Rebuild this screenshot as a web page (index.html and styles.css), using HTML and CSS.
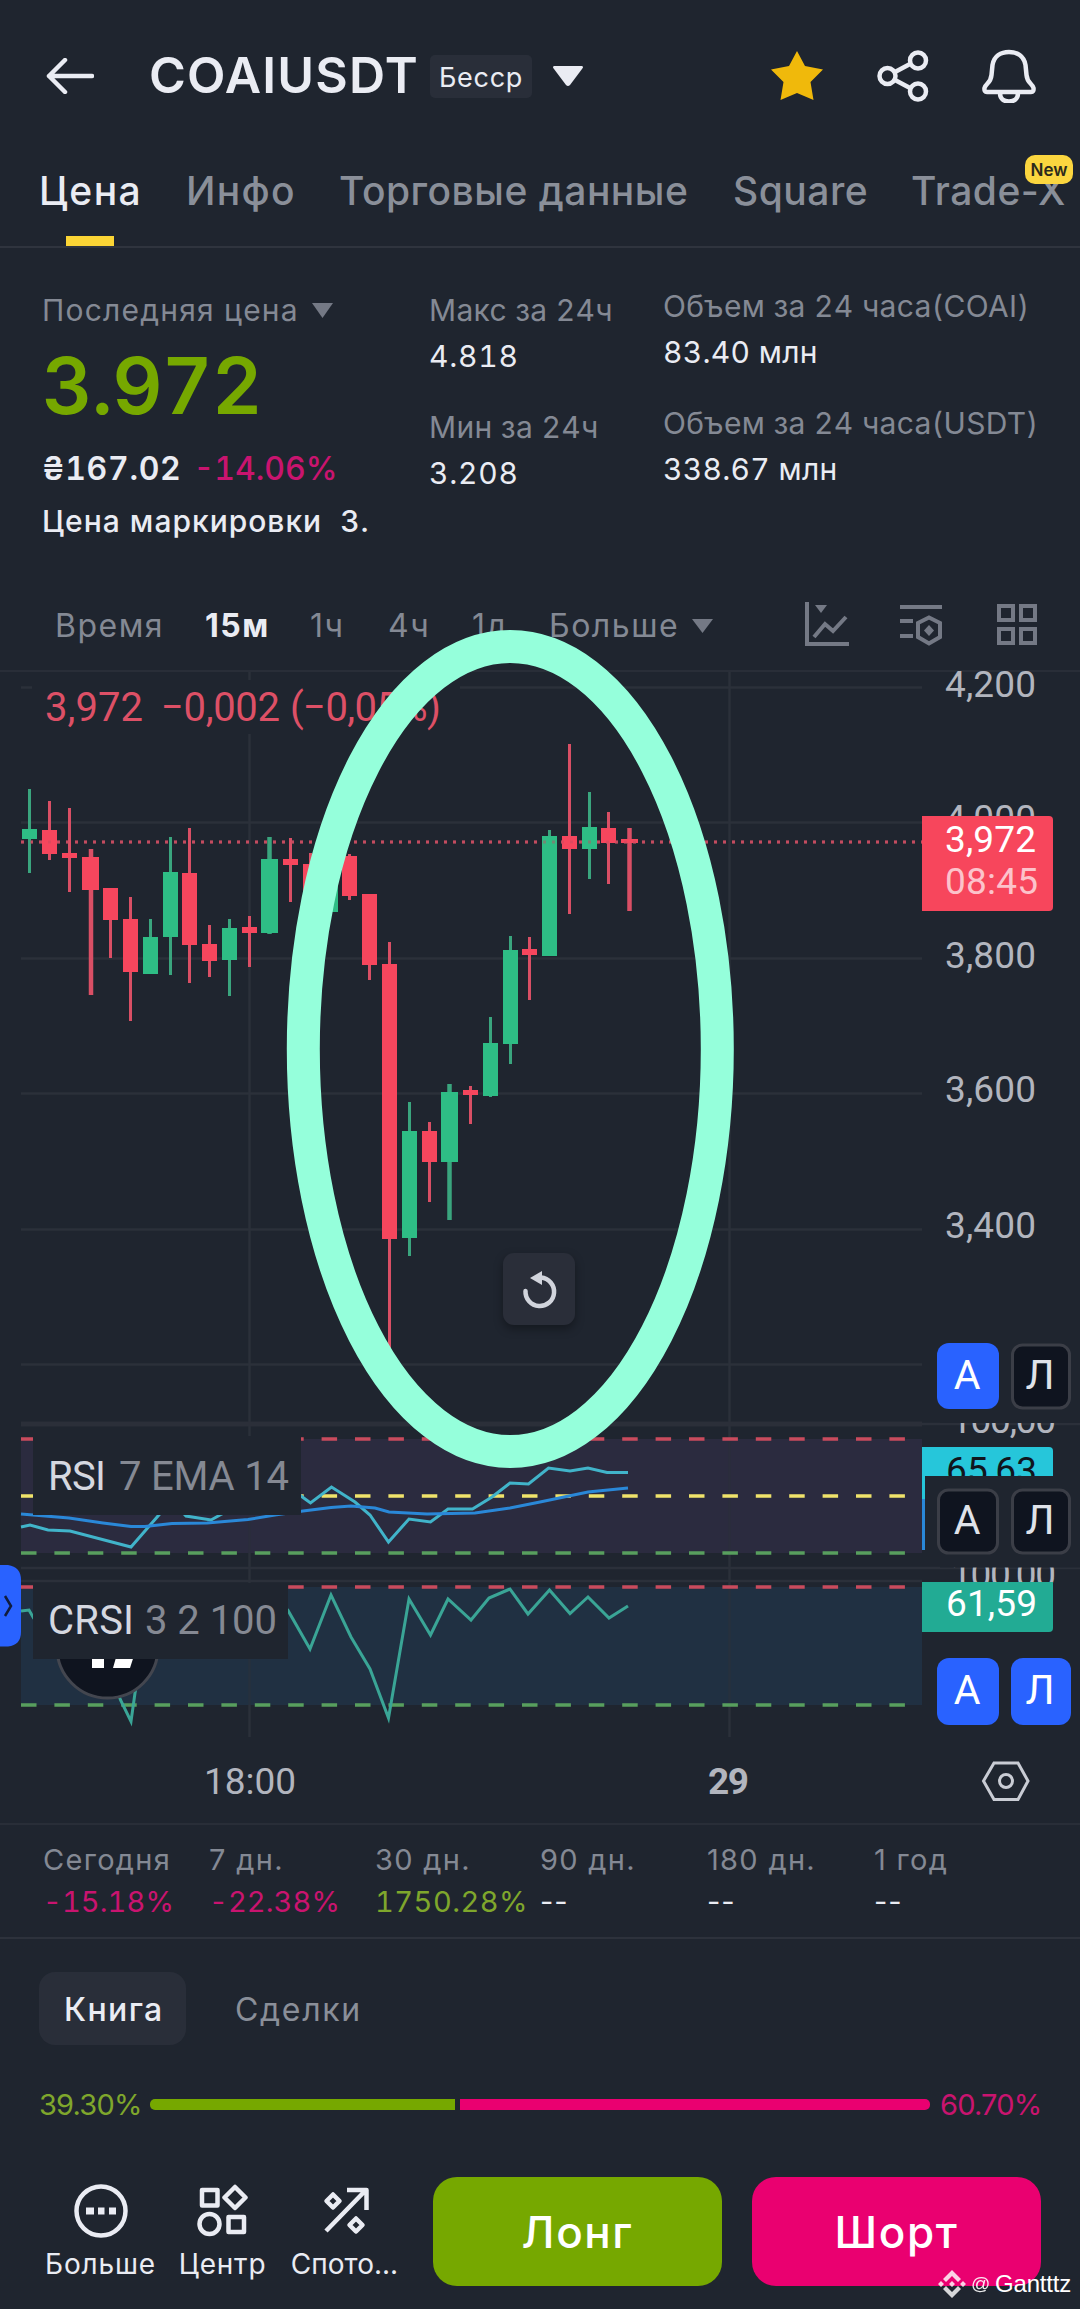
FILE: index.html
```html
<!DOCTYPE html>
<html lang="ru">
<head>
    <meta charset="UTF-8">
    <meta name="viewport" content="width=device-width, initial-scale=1.0">
    <title>COAIUSDT</title>
    <link rel="stylesheet" href="styles.css">
</head>
<body>
<header class="header">
    <svg class="back" width="48" height="36" viewBox="0 0 48 36"><path d="M46 18H3M19 2L3 18L19 34"/></svg>
    <h1>COAIUSDT</h1>
    <span class="badge">Бесср</span>
    <svg class="caret" width="32" height="22" viewBox="0 0 32 22"><path d="M2 1H30Q32 2 30 4L18 20Q16 22 14 20L2 4Q0 2 2 1Z"/></svg>
    <div class="header-icons">
        <svg width="54" height="52" viewBox="0 0 54 52"><path class="star" d="M27 1L35 16L53 19.500L40.500 32L43.500 50L27 43L10.500 50L13.500 32L1 19.500L19 16Z"/></svg>
        <svg width="52" height="52" viewBox="0 0 52 52"><path d="M18 22L33 14M18 30L33 38"/><circle cx="10.500" cy="26" r="8"/><circle cx="41" cy="10.500" r="8"/><circle cx="41" cy="41.500" r="8"/></svg>
        <svg width="54" height="54" viewBox="0 0 54 54"><path d="M5 43Q2 43 2.500 39Q3 37 5.500 34.500Q9 31 9.500 26L10.500 16C12 7 19 3 27 3S42 7 43.500 16L44.500 26Q45 31 48.500 34.500Q51 37 51.500 39Q52 43 49 43ZM18 44C18 50 22 52.500 27 52.500S36 50 36 44"/></svg>
    </div>
</header>

<nav class="tabs">
    <a class="active">Цена</a>
    <a class="info">Инфо</a>
    <a>Торговые данные</a>
    <a>Square</a>
    <a>Trade-X<span class="new">New</span></a>
</nav>

<section class="stats">
    <div class="last">
        <div class="last-label">Последняя цена <svg width="21" height="15" viewBox="0 0 21 15"><path d="M0 0H21L10.500 15Z"/></svg></div>
        <div class="last-price">3.972</div>
        <div class="last-change"><span>₴167.02</span><span class="down">-14.06%</span></div>
        <div class="mark"><span>Цена маркировки</span><span>3.</span></div>
    </div>
    <dl class="range">
        <dt>Макс за 24ч</dt>
        <dd>4.818</dd>
        <dt>Мин за 24ч</dt>
        <dd>3.208</dd>
    </dl>
    <dl class="volume">
        <dt>Объем за 24 часа(COAI)</dt>
        <dd>83.40 млн</dd>
        <dt>Объем за 24 часа(USDT)</dt>
        <dd>338.67 млн</dd>
    </dl>
</section>

<div class="frames">
    <span>Время</span>
    <span class="active">15м</span>
    <span>1ч</span>
    <span>4ч</span>
    <span>1д</span>
    <span class="more">Больше <svg width="21" height="14" viewBox="0 0 21 14"><path d="M0 0H21L10.500 14Z"/></svg></span>
    <svg class="tool" width="44" height="44" viewBox="0 0 44 44"><path d="M2 0V42H44M9 35L20 22L28 29L41 15"/><path class="fill" d="M10 3H22L16 11Z"/></svg>
    <svg class="tool" width="42" height="44" viewBox="0 0 42 44"><path d="M0 5H42M0 19H13M0 34H13M29 15.500L40 21V35L29 41.500L18 35V21Z"/><path class="fill" d="M29 23L34 28.500L29 34L24 28.500Z"/></svg>
    <svg class="tool" width="42" height="44" viewBox="0 0 42 44"><path d="M3 4H17V18H3ZM25 4H39V18H25ZM3 27H17V41H3ZM25 27H39V41H25Z"/></svg>
</div>

<section class="chart">
    <svg width="1080" height="1151" viewBox="0 672 1080 1151">
        <!-- grid -->
        <path class="grid" d="M21 687.500H922M21 822.500H922M21 958.500H922M21 1093.500H922M21 1229.500H922M21 1364.500H922M249.500 672V1737M729.500 672V1737"/>
        <path class="sep" d="M21 1424H922"/>
        <path class="grid" d="M922 1424H1080M21 1568H1080M21 1581H922"/>

        <!-- candles -->
        <path class="price-line" d="M21 842H922"/>
        <path class="wick up" d="M29.500 789V873M150.500 919V974M170.500 837V975M229.500 919V996M409.500 1102V1256M490.500 1017V1097M510.500 936V1064M549.500 830V956M589.500 792V879"/>
        <path class="wick down" d="M49.500 801V860M69.500 808V892M110.500 888V958M130.500 897V1021M189.500 828V983M209.500 925V977M249.500 916V967M290.500 838V902M310.500 853V910M349.500 854V900M369.500 894V980M389.500 942V1348M429.500 1122V1202M470.500 1086V1124M529.500 937V1000M569.500 744V914M608.500 812V884"/>
        <path class="wick wide down" d="M91 849V995M629.500 828V911"/>
        <path class="wick wide up" d="M269.500 837V934M449.500 1084V1220"/>
        <path class="body up" d="M29.500 829V839M150.500 937V974M170.500 872V937M229.500 928V960M330.500 870V912M409.500 1131V1238M490.500 1043V1096M510.500 950V1044M549.500 836V956M589.500 827V849"/>
        <path class="body down" d="M49.500 830V854M69.500 853V858M110.500 888V920M130.500 919V972M189.500 873V945M209.500 944V961M249.500 927V933M290.500 859V865M310.500 864V905M349.500 856V896M369.500 894V965M389.500 964V1239M429.500 1131V1162M470.500 1090V1095M529.500 949V955M569.500 836V849M608.500 828V843"/>
        <path class="body broad down" d="M90.500 857V890M629.500 839V843"/>
        <path class="body broad up" d="M269.500 859V933M449.500 1092V1162"/>
        <path class="price-line over" d="M21 842H922"/>

        <rect class="cover" x="32" y="680" width="428" height="54"/>
        <g class="legend quote">
            <text x="45" y="721" textLength="98">3,972</text>
            <text x="161" y="721" textLength="119">−0,002</text>
            <text x="290" y="721" textLength="151">(−0,05%)</text>
        </g>

        <!-- RSI -->
        <rect class="rsi-band" x="21" y="1439" width="901" height="114"/>
        <path class="grid faint" d="M249.500 1439V1553M729.500 1439V1553"/>
        <path class="dash red" d="M21 1439H914"/>
        <path class="dash yellow" d="M21 1496H914"/>
        <path class="dash green" d="M21 1553H914"/>
        <polyline class="line cyan" points="21,1527 30,1525 48,1530 70,1531 131,1547 158,1516 172,1500 186,1516 211,1520 220,1515 250,1500 280,1480 301,1496 310.500,1503 331.500,1487 355,1502 370,1515 388.500,1542 409,1519 430.500,1522 448,1509 472.500,1509 492,1497 510,1483 528.500,1484 548.500,1468 570,1471 588,1468 607,1472.500 628,1472.500"/>
        <polyline class="line blue" points="21,1514 69,1518 103,1523 131,1526.500 145,1526.500 172,1523.500 207,1523 248,1519.500 275,1515 303,1511 331,1507.500 351,1506 375,1508 389,1512 427,1514 475,1513 510,1508 540,1502 588,1492 628,1488"/>
        <rect class="cover" x="33" y="1436" width="268" height="79"/>
        <g class="legend">
            <text x="48" y="1490" textLength="58">RSI</text>
            <text class="dim" x="119" y="1490" textLength="170">7 EMA 14</text>
        </g>

        <!-- Connors RSI -->
        <rect class="crsi-band" x="21" y="1587" width="901" height="118"/>
        <path class="grid faint" d="M249.500 1587V1705M729.500 1587V1705"/>
        <path class="dash red" d="M21 1587H914"/>
        <path class="dash green" d="M21 1705H914"/>
        <polyline class="line teal" points="21,1611 29,1610 33.500,1618 60,1650 110,1670 120.500,1700 131,1721.500 135,1693 150,1620"/>
        <polyline class="line teal" points="270,1590 288,1610.500 310,1649 331,1595 351,1637 370,1669 388.500,1718 409,1599 430.500,1635 448,1599 471,1620 489,1598 510,1589 528,1614 549.500,1590 570,1613.500 588,1597 609,1618 628,1606"/>
        <circle class="tv" cx="107.500" cy="1647.500" r="50.500"/>
        <path class="tv-mark" d="M92 1640H104V1668H92ZM121 1640H139L130 1668H113Z"/>
        <rect class="cover" x="33" y="1583" width="255" height="76"/>
        <g class="legend">
            <text x="48" y="1634" textLength="86">CRSI</text>
            <text class="dim" x="145" y="1634" textLength="132">3 2 100</text>
        </g>

        <!-- price scale -->
        <g class="scale">
            <text x="945" y="697" textLength="91">4,200</text>
            <text x="945" y="831" textLength="91">4,000</text>
            <text x="945" y="968" textLength="91">3,800</text>
            <text x="945" y="1102" textLength="91">3,600</text>
            <text x="945" y="1238" textLength="91">3,400</text>
            <text x="951" y="1433" textLength="105">100,00</text>
            <text x="951" y="1587" textLength="105">100,00</text>
        </g>
        <rect class="cover" x="940" y="1400" width="140" height="23"/>
        <rect class="cover" x="940" y="1555" width="140" height="12.500"/>
        <path class="tag-red" d="M922 816H1049Q1053 816 1053 820V907Q1053 911 1049 911H922Z"/>
        <text class="tag" x="945" y="852" textLength="91">3,972</text>
        <text class="tag soft" x="945" y="894" textLength="93">08:45</text>
        <path class="tag-cyan" d="M922 1447H1049Q1053 1447 1053 1451V1476H922Z"/>
        <text class="tag dark" x="946" y="1483" textLength="91">65,63</text>
        <rect class="cover" x="925" y="1476" width="155" height="79"/>
        <rect class="tag-cyan" x="922" y="1476" width="3" height="23"/>
        <rect class="tag-blue" x="922" y="1499" width="3" height="51"/>
        <path class="tag-teal" d="M922 1582H1053V1628Q1053 1632 1049 1632H922Z"/>
        <text class="tag" x="946" y="1616" textLength="91">61,59</text>

        <g class="mode">
            <rect class="on" x="937" y="1343" width="62" height="66" rx="12"/><text x="967" y="1389">А</text>
            <rect x="1012.500" y="1345" width="57" height="63" rx="10"/><text x="1040" y="1389">Л</text>
            <rect x="938.500" y="1490" width="59" height="63" rx="10"/><text x="967" y="1534">А</text>
            <rect x="1012.500" y="1490" width="57" height="63" rx="10"/><text x="1040" y="1534">Л</text>
            <rect class="on" x="937" y="1658" width="62" height="67" rx="12"/><text x="967" y="1704">А</text>
            <rect class="on" x="1011" y="1658" width="60" height="67" rx="12"/><text x="1040" y="1704">Л</text>
        </g>

        <!-- time scale -->
        <g class="scale">
            <text x="204" y="1794" textLength="92">18:00</text>
            <text class="day" x="708" y="1794" textLength="41">29</text>
        </g>
        <path class="hex" d="M983.500 1781L994 1763H1018L1028 1781L1018 1799.500H994Z"/>
        <circle class="hex" cx="1006" cy="1781" r="6.500"/>

        <!-- drawer handle -->
        <path class="handle" d="M0 1565H8Q21 1567 21 1580V1632Q21 1645 8 1646.500H0Z"/>
        <path class="handle-arrow" d="M5 1596L11 1606L5 1616"/>

        <rect class="reset" x="503" y="1253" width="72" height="72" rx="11"/>
        <path class="reset-arc" d="M525.500 1291A14.300 14.300 0 1 0 541 1277.500"/>
        <path class="reset-head" d="M530 1278L542 1271V1285Z"/>

        <ellipse class="marker" cx="510.300" cy="1049" rx="207" ry="402.500"/>
    </svg>
</section>

<section class="periods">
    <div><span>Сегодня</span><b class="down">-15.18%</b></div>
    <div><span>7 дн.</span><b class="down">-22.38%</b></div>
    <div><span>30 дн.</span><b class="up">1750.28%</b></div>
    <div><span>90 дн.</span><b class="empty">--</b></div>
    <div><span>180 дн.</span><b class="empty">--</b></div>
    <div><span>1 год</span><b class="empty">--</b></div>
</section>

<div class="book-tabs">
    <span class="active">Книга</span>
    <span>Сделки</span>
</div>

<div class="ratio">
    <span class="up">39.30%</span>
    <div class="ratio-bar"><i class="buy"></i><i class="sell"></i></div>
    <span class="down">60.70%</span>
</div>

<footer class="footer">
    <a class="nav-more">
        <svg width="54" height="54" viewBox="0 0 54 54"><circle cx="27" cy="27" r="24.500"/><path class="solid" d="M12 23.500H20V30.500H12ZM24 23.500H30.500V30.500H24ZM35 23.500H42V30.500H35Z"/></svg>
        Больше
    </a>
    <a class="nav-center">
        <svg width="54" height="54" viewBox="0 0 54 54"><path d="M6 6H21.500V21.500H6ZM39 3L49.500 13.500L39 24L28.500 13.500ZM32.500 33H48V48H32.500Z"/><circle cx="13.500" cy="40" r="10"/></svg>
        Центр
    </a>
    <a class="nav-spot">
        <svg width="54" height="54" viewBox="0 0 54 54"><path d="M8 47L46 8M29 6H48.500V26M15 10.500L21.500 17L15 23.500L8.500 17ZM38 34.500L44.500 41L38 47.500L31.500 41Z"/></svg>
        Спото...
    </a>
    <button class="long">Лонг</button>
    <button class="short">Шорт</button>
    <div class="watermark">
        <svg width="28" height="30" viewBox="0 0 28 30"><path d="M14 1L23 10L20 13L14 7L8 13L5 10ZM14 29L5 20L8 17L14 23L20 17L23 20ZM14 12L17 15L14 18L11 15ZM3 12L6 15L3 18L0 15ZM25 12L28 15L25 18L22 15Z"/></svg>
        <span class="at">@</span>
        <span>Gantttz</span>
    </div>
</footer>
</body>
</html>
```

FILE: styles.css
```css
*{
    box-sizing: border-box;
}
body{
    margin: 0;
    width: 1080px;
    height: 2309px;
    overflow: hidden;
    background: #1f252f;
    color: #eaecf3;
    font-family: Inter, "Noto Sans", sans-serif;
    white-space: nowrap;
}
svg{
    display: block;
    flex: none;
}
.up{ color: #7fa72c;}
.down{ color: #c9146f;}

/* header */
.header{
    display: flex;
    align-items: center;
    height: 152px;
    padding: 0 44px 0 46px;
}
.back{
    fill: none;
    stroke: #eaecf3;
    stroke-width: 4.5;
    stroke-linecap: round;
    stroke-linejoin: round;
}
h1{
    width: 279px;
    margin: 0 0 3px 55px;
    font-size: 50px;
    font-weight: 600;
    line-height: 60px;
    letter-spacing: 1.2px;
}
.badge{
    width: 102px;
    height: 43px;
    margin-left: 2px;
    padding-top: 3px;
    border-radius: 5px;
    background: #292e39;
    font-size: 27px;
    line-height: 40px;
    letter-spacing: .7px;
    text-align: center;
}
.caret{
    margin-left: 20px;
    fill: #eaecf3;
}
.header-icons{
    display: flex;
    align-items: center;
    gap: 53px;
    margin-left: auto;
}
.header-icons svg{
    fill: none;
    stroke: #eaecf3;
    stroke-width: 4.5;
    stroke-linejoin: round;
}
.header-icons .star{
    fill: #f0b90b;
    stroke: none;
}

/* tabs */
.tabs{
    display: grid;
    grid-template-columns: 147px 153px 394px 178px 160px;
    height: 96px;
    padding-left: 39px;
    border-bottom: 2px solid #2f343e;
    color: #8a8f99;
    font-size: 39px;
    font-weight: 500;
    line-height: 78px;
    letter-spacing: .5px;
}
.tabs a{
    position: relative;
}
.tabs .active{
    color: #eaecf3;
    letter-spacing: 1.5px;
}
.tabs .info{
    letter-spacing: 1.3px;
}
.tabs .active::after{
    content: "";
    position: absolute;
    left: 27px;
    bottom: 0;
    width: 48px;
    height: 10px;
    background: #fbd535;
}
.new{
    position: absolute;
    left: 114px;
    top: 3px;
    width: 48px;
    height: 29px;
    border-radius: 10px;
    background: #fbd63f;
    color: #2b2a1c;
    font-size: 17px;
    font-weight: 600;
    line-height: 30px;
    letter-spacing: 0;
    text-align: center;
}

/* 24h stats */
.stats{
    display: grid;
    grid-template-columns: 387px 234px 1fr;
    height: 331px;
    padding: 35px 0 0 42px;
    font-size: 30px;
    font-variant-numeric: tabular-nums;
}
.last{
    padding-top: 9px;
}
.last-label{
    display: flex;
    align-items: center;
    gap: 13px;
    line-height: 36px;
    letter-spacing: 1.2px;
    color: #848994;
}
.last-label svg, .more svg{
    fill: #747985;
}
.last-price{
    color: #76a800;
    font-size: 78px;
    font-weight: 600;
    line-height: 116px;
    letter-spacing: -.6px;
}
.last-change{
    display: flex;
    gap: 12px;
    font-size: 32px;
    font-weight: 600;
    line-height: 49px;
    letter-spacing: .7px;
}
.last-change .down{
    font-weight: 500;
    letter-spacing: 0;
}
.mark{
    display: flex;
    gap: 18px;
    font-weight: 500;
    line-height: 56px;
    letter-spacing: 1px;
}
dl{
    margin: 0;
    line-height: 46px;
    letter-spacing: .3px;
}
.range{
    padding-top: 4px;
}
.range dd{
    letter-spacing: .8px;
}
dt{
    color: #848994;
}
dd{
    margin: 0 0 25px;
}

/* time frames */
.frames{
    display: grid;
    grid-template-columns: 150px 105px 78px 84px 77px 256px 95px 96px 42px;
    align-items: center;
    height: 93px;
    padding: 2px 0 0 55px;
    border-bottom: 2px solid #292e38;
    color: #848994;
    font-size: 32px;
    letter-spacing: 1.5px;
}
.frames .active{
    color: #eaecf3;
    font-weight: 700;
}
.more{
    display: flex;
    align-items: center;
    gap: 13px;
}
.tool{
    margin-bottom: 3px;
    fill: none;
    stroke: #747985;
    stroke-width: 4;
}
.tool .fill{
    fill: #747985;
    stroke: none;
}

/* chart */
.chart{
    height: 1151px;
    font-family: Roboto, sans-serif;
}
.chart svg{
    position: relative;
    overflow: visible;
}
.chart path, .chart polyline, .chart ellipse{
    fill: none;
}
.grid{
    stroke: #2b303a;
    stroke-width: 2.5;
}
.faint{
    opacity: .5;
}
.sep{
    stroke: #2b2f39;
    stroke-width: 5;
}
.price-line{
    stroke: #c44c60;
    stroke-width: 3;
    stroke-dasharray: 3 6;
}
.over{
    opacity: .45;
}
.wick{ stroke-width: 3;}
.wick.wide{ stroke-width: 4.5;}
.wick.up{ stroke: #3aa57e;}
.wick.down{ stroke: #d94f65;}
.body{ stroke-width: 15;}
.body.broad{ stroke-width: 17;}
.body.up{ stroke: #2ebd85;}
.body.down{ stroke: #f6465d;}
.cover{
    fill: #1f252f;
}
.legend{
    fill: #d5d8e0;
    font-size: 40px;
}
.quote{
    fill: #dd5066;
}
.dim{
    fill: #858993;
}
.rsi-band{ fill: #2b2b3f;}
.crsi-band{ fill: #203042;}
.dash{
    stroke-width: 3.5;
    stroke-dasharray: 15.5 17.9;
}
.dash.red{ stroke: #c94b5d;}
.dash.yellow{ stroke: #f0e36b;}
.dash.green{ stroke: #589f5e;}
.line{ stroke-width: 3;}
.cyan{ stroke: #41b4ca;}
.blue{ stroke: #2a88d8;}
.teal{ stroke: #3aa596;}
.tv{
    fill: #0f141f;
    stroke: #43464f;
    stroke-width: 3;
}
.chart .tv-mark{ fill: #fff;}
.scale{
    fill: #b2b5be;
    font-size: 37px;
}
.day{
    font-weight: 700;
}
.chart .tag-red{ fill: #f7465c;}
.chart .tag-cyan{ fill: #26c6da;}
.chart .tag-blue{ fill: #2a88d8;}
.chart .tag-teal{ fill: #22ab94;}
.tag{
    fill: #fff;
    font-size: 37px;
}
.soft{ fill: #fcc3cb;}
.dark{ fill: #10151d;}
.mode rect{
    fill: #0f141f;
    stroke: #3b3e47;
    stroke-width: 3;
}
.mode .on{
    fill: #2962ff;
    stroke: none;
}
.mode text{
    fill: #dfe2e9;
    font-size: 41px;
    text-anchor: middle;
}
.mode .on + text{
    fill: #fff;
}
.hex{
    fill: none;
    stroke: #c9ccd4;
    stroke-width: 3;
}
.chart .handle{ fill: #2962ff;}
.handle-arrow{
    stroke: #101c3d;
    stroke-width: 2.5;
}
.reset{
    fill: #2a2e39;
    filter: drop-shadow(0 4px 5px rgba(0, 0, 0, .35));
}
.reset-arc{
    stroke: #d1d4dc;
    stroke-width: 4.5;
    stroke-linecap: round;
}
.chart .reset-head{ fill: #d1d4dc;}
.marker{
    stroke: #95ffdb;
    stroke-width: 33;
}

/* performance by period */
.periods{
    display: grid;
    grid-template-columns: 166px 166px 165px 167px 167px 1fr;
    height: 116px;
    padding: 14px 0 0 43px;
    border-top: 2px solid #292e38;
    border-bottom: 2px solid #2d323c;
    font-size: 29px;
    letter-spacing: 1.3px;
}
.periods span, .periods b{
    display: block;
    font-weight: 400;
    line-height: 42px;
}
.periods span{
    color: #848994;
}
.periods b{
    font-variant-numeric: tabular-nums;
    letter-spacing: .1px;
}
.periods .up{
    letter-spacing: .5px;
}
.periods .empty{
    font-variant-numeric: normal;
    letter-spacing: 1px;
}

/* book */
.book-tabs{
    display: flex;
    gap: 24px;
    margin: 33px 0 0 39px;
    font-size: 32px;
    line-height: 75px;
    letter-spacing: 1.7px;
    color: #8a8f99;
}
.book-tabs span{
    height: 73px;
    padding: 0 25px;
}
.book-tabs .active{
    width: 147px;
    border-radius: 16px;
    background: #292e39;
    color: #eaecf3;
    font-weight: 500;
    letter-spacing: 1.4px;
}
.ratio{
    display: flex;
    align-items: center;
    height: 40px;
    margin: 39px 39px 0;
    font-size: 29px;
    letter-spacing: -.8px;
}
.ratio span{
    width: 101px;
}
.ratio-bar{
    display: flex;
    gap: 5px;
    width: 780px;
    margin: 0 10px;
}
.ratio-bar i{
    height: 11px;
}
.buy{
    flex: 39.3;
    border-radius: 5px 0 0 5px;
    background: #76a800;
}
.sell{
    flex: 60.7;
    border-radius: 0 5px 5px 0;
    background: #ea0070;
}

/* footer */
.footer{
    position: relative;
    display: grid;
    grid-template-columns: 135px 112px 140px 319px 289px;
    height: 132px;
    margin-top: 53px;
    padding-left: 46px;
    font-size: 28px;
}
.footer a{
    display: flex;
    flex-direction: column;
    align-items: center;
    padding-top: 7px;
    line-height: 52px;
    letter-spacing: .8px;
}
.nav-more{ width: 109px;}
.nav-center{ width: 83px;}
.nav-spot{ width: 103px;}
.footer a svg{
    fill: none;
    stroke: #eaecf3;
    stroke-width: 4.5;
    stroke-linejoin: round;
}
.footer .nav-spot{
    letter-spacing: 0;
}
.footer a .solid{
    fill: #eaecf3;
    stroke: none;
}
.footer button{
    width: 289px;
    height: 109px;
    padding-top: 2px;
    border: 0;
    border-radius: 24px;
    color: #fff;
    font-family: inherit;
    font-size: 44px;
    font-weight: 500;
    letter-spacing: 1.6px;
}
.long{ background: #76a800;}
.short{ background: #ea0070;}
.watermark{
    position: absolute;
    left: 938px;
    top: 92px;
    display: flex;
    align-items: center;
    gap: 5px;
    font-family: "Liberation Sans", Arial, sans-serif;
    font-size: 24px;
    line-height: 30px;
    letter-spacing: -.2px;
    color: #fff;
}
.watermark svg{
    fill: #fff;
    opacity: .82;
}
.at{
    font-size: 19px;
    opacity: .9;
}
```
